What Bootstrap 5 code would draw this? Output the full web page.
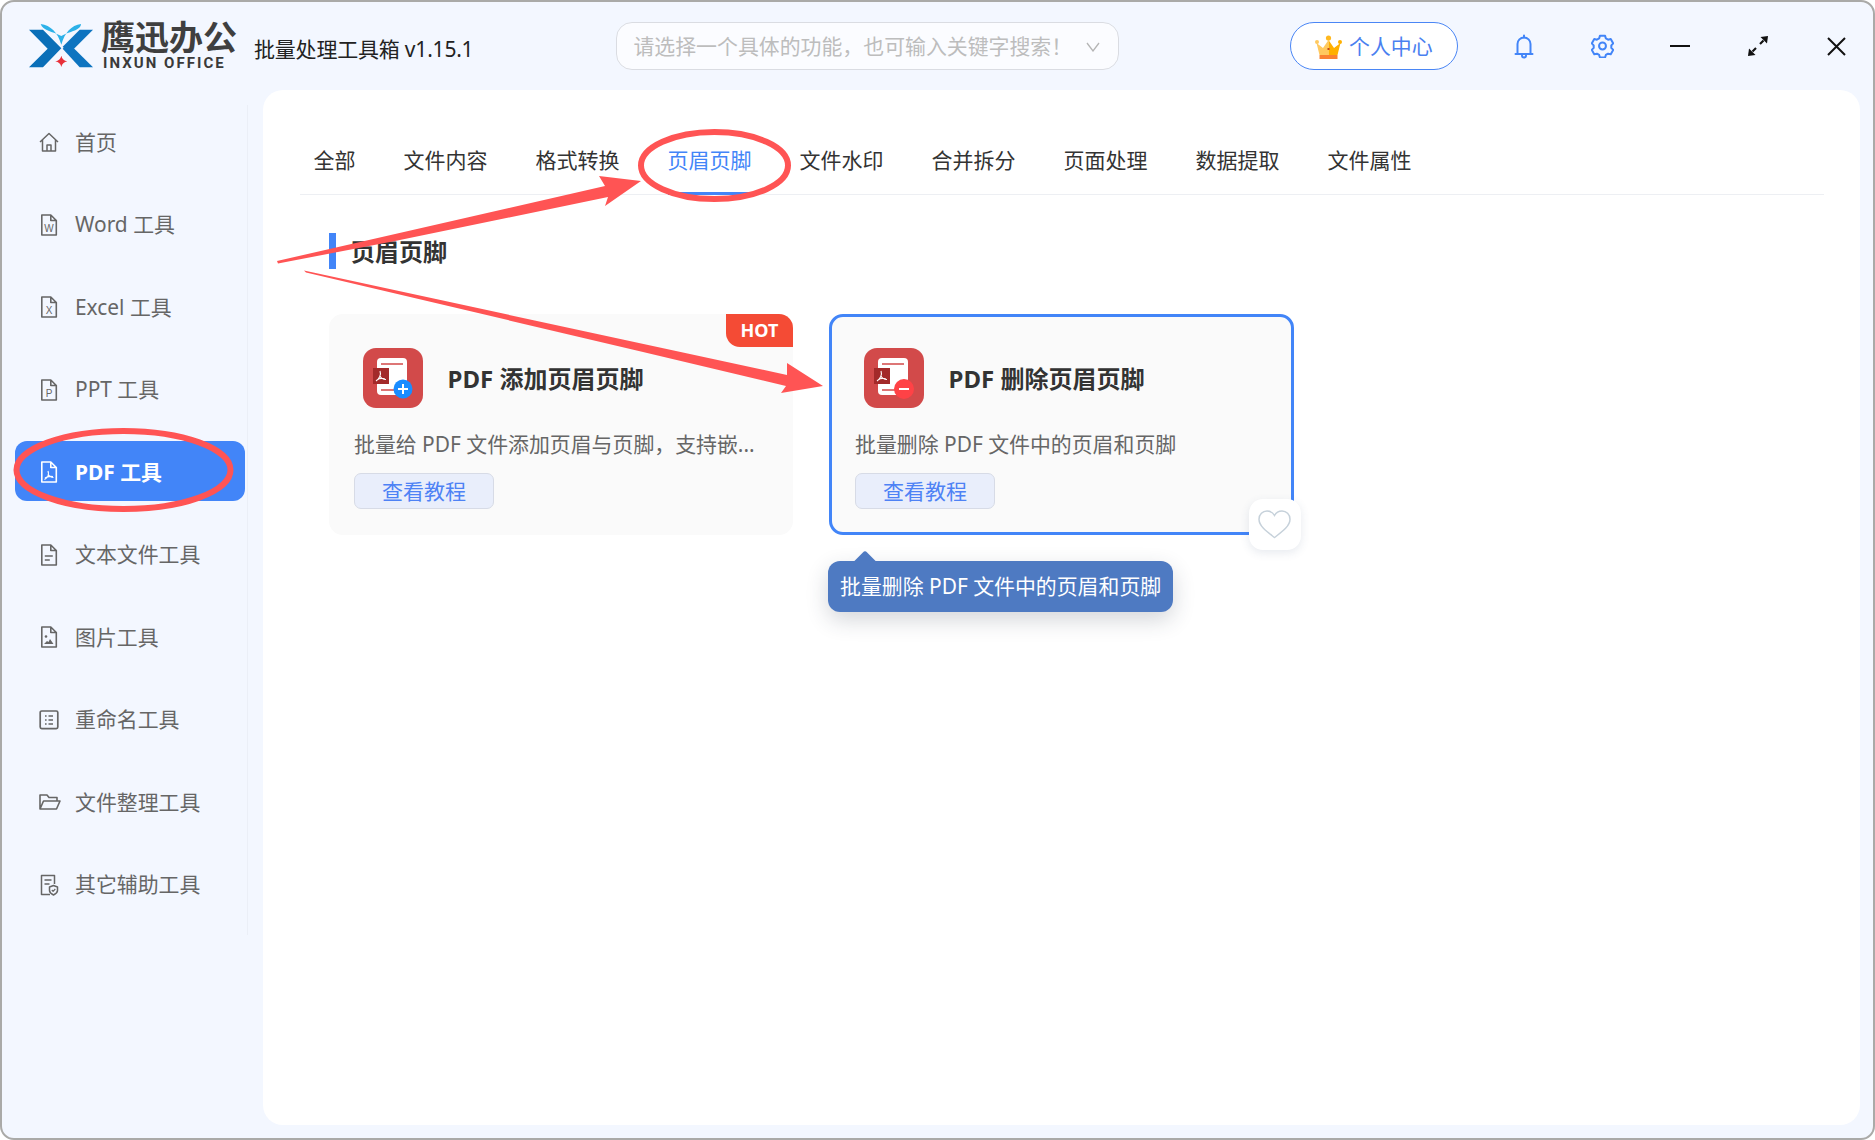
<!DOCTYPE html>
<html lang="zh-CN">
<head>
<meta charset="utf-8">
<title>鹰迅办公</title>
<link rel="stylesheet" href="https://cdn.jsdelivr.net/npm/bootstrap@5.3.0/dist/css/bootstrap.min.css">
<style>
html,body{margin:0;height:1140px;overflow:hidden;background:#fff}
body{position:relative;font-family:"Noto Sans","Noto Sans CJK SC",sans-serif;color:#333}
.app-win{height:1140px;border:2px solid #aaaaa8;border-radius:14px;background:#f3f7ff;overflow:hidden}
.top-bar{height:88px;padding:0 17px 0 26px}
.logo-cn{font-size:34px;line-height:33px;font-weight:700;color:#3f3f3f;margin-top:-2px}
.logo-en{font-family:"Roboto",sans-serif;font-size:15px;line-height:14px;font-weight:700;letter-spacing:2.05px;color:#3a3a3a;margin:2px 0 0 2px}
.app-name{font-size:21px;line-height:30px;color:#222;margin:6px 0 0 17px;white-space:nowrap;letter-spacing:-.2px}
.search-box{width:503px;height:48px;margin-left:143px;background:#fbfcff;border:1.5px solid #dadce2;border-radius:16px;padding:2px 18px 0 16px;color:#bdbdbd;font-size:20.9px;white-space:nowrap}
.user-btn{width:168px;height:48px;margin-left:auto;margin-right:8px;background:#fff;border:1.5px solid #4a86f5;border-radius:24px;color:#4a80f0;font-size:20.9px;padding:2px 0 0 24px;gap:7px}
.win-icon{width:40px;height:40px;margin-left:38px}
.body-row{height:1048px}
.side-wrap{width:261px;padding:15px 15px 0 0}
.side-list{height:830px;width:246px;padding:5.800px 2px 0 13px;border-right:1px solid #ebeff7;gap:22.500px}
.side-item{height:60px;padding:3px 0 0 24px;gap:16px;border-radius:12px;color:#666;font-size:20.9px;text-decoration:none}
.side-item.is-on{background:#4285f8;color:#fff;font-weight:700}
.side-item svg{flex:none}
.ico-wide{margin-right:-2px}
.main-panel{width:1597px;height:1035px;background:#fff;border-radius:20px;padding:56px 36px 0 37px}
.tab-row{border-bottom:1px solid #edeff3;padding-left:13.500px;gap:48px;height:49px}
.tab-row .nav-link{padding:0;height:49px;line-height:28px;font-size:21px;color:#333;border-bottom:3px solid transparent}
.tab-row .nav-link.active{color:#4285f8;border-bottom-color:#4285f8}
.sec-title{margin:38px 0 0 29px;height:36px;border-left:7px solid #4285f8;padding-left:15px;font-size:24px;font-weight:700;color:#333;line-height:38px}
.card-row{margin:45px 0 0 29px;gap:36px}
.tool-card{width:464px;height:221px;border:3px solid #fafafa;border-radius:14px;background:#fafafa;padding:31px 0 0 22px}
.tool-card.is-hover{border-color:#4285f8;width:464.500px;padding-left:23px}
.tool-head{margin-left:9px;gap:24.500px;height:60px}
.tool-name{font-size:24px;font-weight:700;color:#333;line-height:62px;white-space:nowrap}
.tool-desc{margin-top:21px;font-size:20.9px;line-height:30px;color:#666;white-space:nowrap}
.guide-btn{width:140px;height:36px;margin-top:14px;padding:0;background:#e9eefb;border:1px solid #d7dbe6;border-radius:7px;color:#4e82f5;font-size:21px;line-height:31px}
.hot-tag{position:absolute;top:-3px;right:-3px;width:67px;height:33px;background:#f44b35;color:#fff;font-size:18px;font-weight:700;line-height:33px;text-align:center;border-radius:0 14px 0 14px}
.fav-box{position:absolute;right:-10px;bottom:-18px;width:52px;height:51px;background:#fff;border-radius:14px;box-shadow:0 3px 10px rgba(60,80,120,.12)}
.hint-tip{position:absolute;left:-4px;top:244px;width:345px;height:51px;background:#4e7ac2;border-radius:12px;color:#fff;font-size:20.9px;line-height:51px;padding-left:12px;white-space:nowrap;box-shadow:0 8px 22px rgba(40,50,70,.2)}
.hint-tip::before{content:"";position:absolute;left:28px;top:-7px;width:18px;height:18px;background:#4e7ac2;transform:rotate(45deg);border-radius:3px}
.hint-tip span{position:relative}
.mark-layer{position:absolute;left:0;top:0;width:1875px;height:1140px;pointer-events:none}
</style>
</head>
<body>
<div class="app-win d-flex flex-column">
  <header class="top-bar d-flex align-items-center">
    <svg width="65" height="45" viewBox="12 18 195 135">
      <polygon points="15,35 57,35 112,91 57,148 15,148 71,92" fill="#0a6fb8"/>
      <polygon points="207,35 167,35 116,86 130,100 150,92" fill="#0d74c0"/>
      <polygon points="116,92 167,148 207,148 151,92 131,78" fill="#0d74c0"/>
      <path d="M50,18 C80,22 102,44 112,80 C122,44 142,22 171,18 C170,38 136,40 112,54 C86,40 56,38 50,18Z" fill="#2cb1e8"/>
      <path d="M112,113 Q115,127 130,130 Q115,133 112,147 Q109,133 94,130 Q109,127 112,113Z" fill="#e8303a"/>
    </svg>
    <div class="d-flex flex-column ms-2">
      <div class="logo-cn">鹰迅办公</div>
      <div class="logo-en">INXUN OFFICE</div>
    </div>
    <div class="app-name">批量处理工具箱 v1.15.1</div>
    <div class="search-box d-flex align-items-center justify-content-between">
      <span>请选择一个具体的功能，也可输入关键字搜索！</span>
      <svg width="14" height="10" viewBox="0 0 14 10" fill="none" stroke="#b5b5b5" stroke-width="1.3"><path d="M1 1l6 8 6-8"/></svg>
    </div>
    <button type="button" class="user-btn btn d-flex align-items-center">
      <svg width="27" height="24" viewBox="0 0 27 24">
        <polygon points="1.500,8 8,13 13.500,5 13.500,20 4.500,20" fill="#ffc95f"/>
        <polygon points="25.500,8 19,13 13.500,5 13.500,20 22.500,20" fill="#ffb000"/>
        <circle cx="13.500" cy="3" r="2.600" fill="#ffb81f"/><circle cx="2" cy="7" r="2" fill="#ffc95f"/><circle cx="25" cy="7" r="2" fill="#ffb000"/>
        <rect x="4.500" y="20" width="18" height="4" fill="#fa8232"/>
        <rect x="12.500" y="13" width="2" height="2" fill="#c2491d"/>
      </svg>
      <span>个人中心</span>
    </button>
    <div class="win-icon d-flex align-items-center justify-content-center">
      <svg width="20" height="25" viewBox="0 0 20 25" fill="none" stroke="#4285f8" stroke-width="2" stroke-linejoin="round"><path d="M3.500 20V10a6.500 6.500 0 0 1 13 0v10"/><path d="M1.500 20h17" stroke-linecap="round"/><path d="M10 1.500v2M8 21.500a2 2 0 0 0 4 0" stroke-linecap="round"/></svg>
    </div>
    <div class="win-icon d-flex align-items-center justify-content-center">
      <svg width="23" height="24" viewBox="0 0 24 25" fill="none" stroke="#4285f8" stroke-width="2.100" stroke-linejoin="round"><path d="M9.300 2.200h5.400l.8 2.700 2.300 1.300 2.800-.6 2.600 4.500-2 2.100v2.600l2 2.100-2.600 4.500-2.800-.6-2.300 1.300-.8 2.700H9.300l-.8-2.700-2.300-1.300-2.800.6-2.600-4.500 2-2.100v-2.600l-2-2.100 2.600-4.500 2.800.6 2.300-1.300z" transform="translate(0 -.3)"/><circle cx="12" cy="12.500" r="3.600"/></svg>
    </div>
    <div class="win-icon d-flex align-items-center justify-content-center">
      <svg width="20" height="4" viewBox="0 0 20 4"><rect y="1" width="20" height="2" fill="#111"/></svg>
    </div>
    <div class="win-icon d-flex align-items-center justify-content-center">
      <svg width="20" height="20" viewBox="0 0 20 20" fill="#111" stroke="#111"><polygon points="20,0 12.500,1 19,7.500" stroke="none"/><path d="M15.500 4.500L12 8" stroke-width="2.200"/><polygon points="0,20 7.500,19 1,12.500" stroke="none"/><path d="M4.500 15.500L8 12" stroke-width="2.200"/></svg>
    </div>
    <div class="win-icon d-flex align-items-center justify-content-center">
      <svg width="19" height="19" viewBox="0 0 19 19" fill="none" stroke="#111" stroke-width="2"><path d="M1 1l17 17M18 1L1 18"/></svg>
    </div>
  </header>
  <div class="body-row d-flex">
    <aside class="side-wrap">
      <nav class="side-list d-flex flex-column">
        <a class="side-item d-flex align-items-center" href="#">
          <svg width="20" height="22" viewBox="0 0 20 22" fill="none" stroke="#666" stroke-width="1.500" stroke-linejoin="round"><path d="M1 11l9-8.500 9 8.500M3.500 9v11h13V9M8 20v-6h4v6"/></svg><span>首页</span></a>
        <a class="side-item d-flex align-items-center" href="#">
          <svg width="20" height="22" viewBox="0 0 20 22" fill="none" stroke="#666" stroke-width="1.600" stroke-linejoin="round"><path d="M2.800 1h9l5.500 5.500V21H2.800zM11.800 1v5.500h5.500"/><text x="10" y="17.500" font-size="10" font-family="Liberation Sans" fill="#666" stroke="none" text-anchor="middle">W</text></svg><span>Word 工具</span></a>
        <a class="side-item d-flex align-items-center" href="#">
          <svg width="20" height="22" viewBox="0 0 20 22" fill="none" stroke="#666" stroke-width="1.600" stroke-linejoin="round"><path d="M2.800 1h9l5.500 5.500V21H2.800zM11.800 1v5.500h5.500"/><text x="10" y="17.500" font-size="10" font-family="Liberation Sans" fill="#666" stroke="none" text-anchor="middle">X</text></svg><span>Excel 工具</span></a>
        <a class="side-item d-flex align-items-center" href="#">
          <svg width="20" height="22" viewBox="0 0 20 22" fill="none" stroke="#666" stroke-width="1.600" stroke-linejoin="round"><path d="M2.800 1h9l5.500 5.500V21H2.800zM11.800 1v5.500h5.500"/><text x="10" y="17.500" font-size="10" font-family="Liberation Sans" fill="#666" stroke="none" text-anchor="middle">P</text></svg><span>PPT 工具</span></a>
        <a class="side-item is-on d-flex align-items-center" href="#">
          <svg width="20" height="22" viewBox="0 0 20 22" fill="none" stroke="#fff" stroke-width="1.600" stroke-linejoin="round"><path d="M2.800 1h9l5.500 5.500V21H2.800zM11.800 1v5.500h5.500"/><path d="M9 10c1.500 4-1 7-3.500 8.500M9 13c1 2 3 3.500 5.500 3.500M6 17c2-1.500 5-2 8-1.500" stroke-width="1.200"/></svg><span>PDF 工具</span></a>
        <a class="side-item d-flex align-items-center" href="#">
          <svg width="20" height="22" viewBox="0 0 20 22" fill="none" stroke="#666" stroke-width="1.600" stroke-linejoin="round"><path d="M2.800 1h9l5.500 5.500V21H2.800zM11.800 1v5.500h5.500M5.800 12h8M5.800 16h5"/></svg><span>文本文件工具</span></a>
        <a class="side-item d-flex align-items-center" href="#">
          <svg width="20" height="22" viewBox="0 0 20 22" fill="none" stroke="#666" stroke-width="1.600" stroke-linejoin="round"><path d="M2.800 1h9l5.500 5.500V21H2.800zM11.800 1v5.500h5.500"/><circle cx="7" cy="10.500" r="1.300" fill="#666" stroke="none"/><path d="M5 18l3-3 1.500 1 1.500-3 3.500 5z" fill="#666" stroke="none"/></svg><span>图片工具</span></a>
        <a class="side-item d-flex align-items-center" href="#">
          <svg width="20" height="22" viewBox="0 0 20 22" fill="none" stroke="#666" stroke-width="1.700"><rect x="1.200" y="2" width="17.600" height="17.600" rx="1.500"/><path d="M6 7h1.600M9.500 7h4.500M6 11h1.600M9.500 11h4.500M6 15h1.600M9.500 15h4.500" stroke-width="1.400"/></svg><span>重命名工具</span></a>
        <a class="side-item d-flex align-items-center" href="#">
          <svg width="22" height="22" viewBox="0 0 22 22" class="ico-wide" fill="none" stroke="#666" stroke-width="1.600" stroke-linejoin="round"><path d="M1 18V4h7l2 2.500h8V10M1 18l3.500-8H21l-3.500 8z"/></svg><span>文件整理工具</span></a>
        <a class="side-item d-flex align-items-center" href="#">
          <svg width="20" height="22" viewBox="0 0 20 22" fill="none" stroke="#666" stroke-width="1.500" stroke-linejoin="round"><path d="M11 20.500H2.500V1.500h13V10M5.500 6h7M5.500 10h5"/><path d="M14.500 11.500l4 1.500v3.500c0 2-2 3.500-4 4.500-2-1-4-2.500-4-4.500V13z"/><path d="M12.800 16l1.300 1.300 2.200-2.300" stroke-width="1.200"/></svg><span>其它辅助工具</span></a>
      </nav>
    </aside>
    <main class="main-panel">
      <ul class="nav tab-row">
        <li class="nav-item"><a class="nav-link" href="#">全部</a></li>
        <li class="nav-item"><a class="nav-link" href="#">文件内容</a></li>
        <li class="nav-item"><a class="nav-link" href="#">格式转换</a></li>
        <li class="nav-item"><a class="nav-link active" href="#">页眉页脚</a></li>
        <li class="nav-item"><a class="nav-link" href="#">文件水印</a></li>
        <li class="nav-item"><a class="nav-link" href="#">合并拆分</a></li>
        <li class="nav-item"><a class="nav-link" href="#">页面处理</a></li>
        <li class="nav-item"><a class="nav-link" href="#">数据提取</a></li>
        <li class="nav-item"><a class="nav-link" href="#">文件属性</a></li>
      </ul>
      <h2 class="sec-title">页眉页脚</h2>
      <div class="card-row d-flex">
        <div class="tool-card position-relative">
          <span class="hot-tag">HOT</span>
          <div class="tool-head d-flex">
            <svg width="60" height="60" viewBox="0 0 60 60">
              <rect width="60" height="60" rx="13" fill="#d24a4a"/>
              <rect x="14" y="10" width="30" height="37" rx="4" fill="#fff"/>
              <path d="M18 16h22M18 42h22" stroke="#d24a4a" stroke-width="1.500"/>
              <rect x="10" y="20" width="16" height="16" fill="#a32a2a"/>
              <path d="M17 23c1.500 4-1 8-4 10M17 28c1 2 3 3.500 6 3.500M14 32c2-1.500 5-2 8-1" fill="none" stroke="#fff" stroke-width="1.100"/>
              <circle cx="40" cy="41" r="9.500" fill="#1a8cff"/>
              <path d="M40 36v10M35 41h10" stroke="#fff" stroke-width="2"/>
            </svg>
            <div class="tool-name">PDF 添加页眉页脚</div>
          </div>
          <div class="tool-desc">批量给 PDF 文件添加页眉与页脚，支持嵌...</div>
          <button type="button" class="guide-btn btn">查看教程</button>
        </div>
        <div class="tool-card is-hover position-relative">
          <div class="tool-head d-flex">
            <svg width="60" height="60" viewBox="0 0 60 60">
              <rect width="60" height="60" rx="13" fill="#d24a4a"/>
              <rect x="14" y="10" width="30" height="37" rx="4" fill="#fff"/>
              <path d="M18 16h22M18 42h22" stroke="#d24a4a" stroke-width="1.500"/>
              <rect x="10" y="20" width="16" height="16" fill="#a32a2a"/>
              <path d="M17 23c1.500 4-1 8-4 10M17 28c1 2 3 3.500 6 3.500M14 32c2-1.500 5-2 8-1" fill="none" stroke="#fff" stroke-width="1.100"/>
              <circle cx="40" cy="41" r="10" fill="#ff4246"/>
              <path d="M35 41h10" stroke="#fff" stroke-width="2"/>
            </svg>
            <div class="tool-name">PDF 删除页眉页脚</div>
          </div>
          <div class="tool-desc">批量删除 PDF 文件中的页眉和页脚</div>
          <button type="button" class="guide-btn btn">查看教程</button>
          <div class="fav-box d-flex align-items-center justify-content-center">
            <svg width="33" height="29" viewBox="0 0 33 29" fill="none" stroke="#c6d1da" stroke-width="1.500"><path d="M16.500 27.500C10 22.500 1 16.500 1 9.200 1 4.500 4.700 1 9 1c3.300 0 6 1.700 7.500 4.500C18 2.700 20.700 1 24 1c4.300 0 8 3.500 8 8.200 0 7.300-9 13.300-15.500 18.300z"/></svg>
          </div>
          <div class="hint-tip"><span>批量删除 PDF 文件中的页眉和页脚</span></div>
        </div>
      </div>
    </main>
  </div>
</div>
<svg class="mark-layer" viewBox="0 0 1875 1140">
  <g fill="none" stroke="#ff5454" stroke-width="6">
    <ellipse cx="714.500" cy="165.500" rx="73.500" ry="33.500"/>
    <ellipse cx="123.500" cy="470" rx="107" ry="39"/>
  </g>
  <g fill="#ff5454">
    <polygon points="277,261 605,186 599,176 641,181 605,206 608,197 395,241 278,263.500"/>
    <polygon points="304,270.500 787,375 787,363 823,386 781,393 786,386 643,352 306,272.500"/>
  </g>
</svg>
<script src="https://cdn.jsdelivr.net/npm/bootstrap@5.3.0/dist/js/bootstrap.bundle.min.js"></script>
</body>
</html>
